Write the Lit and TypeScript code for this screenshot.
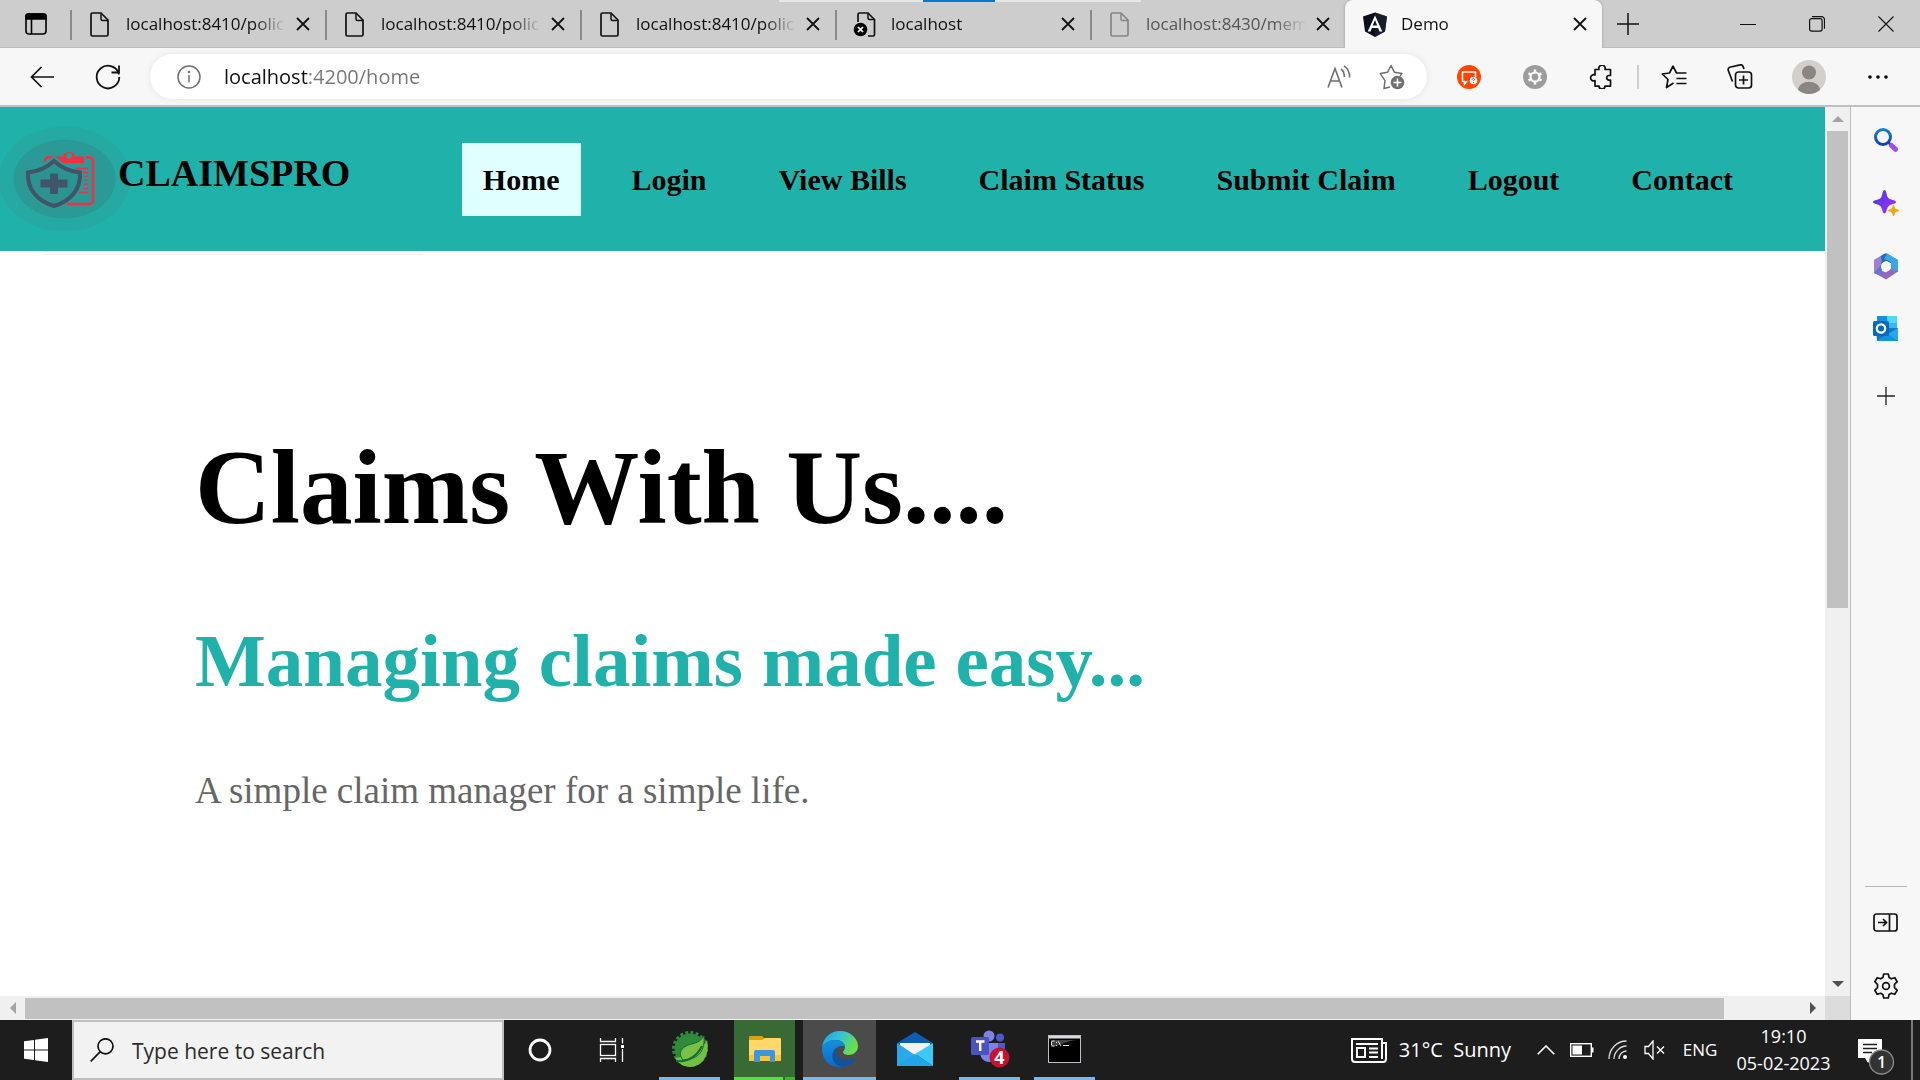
import { LitElement, html, css, svg } from "lit";
import { customElement, property } from "lit/decorators.js";
import { classMap } from "lit/directives/class-map.js";

const cross = html`<svg width="14" height="14" viewBox="0 0 14 14" fill="none" stroke="#111" stroke-width="1.8"><path d="M1 1l12 12M13 1L1 13" /></svg>`;

const pageShape = svg`<path d="M3.500 1H12l7 7v14.500a1.500 1.500 0 0 1-1.500 1.500h-14A1.500 1.500 0 0 1 2 22.500v-20A1.500 1.500 0 0 1 3.500 1z" fill="none" stroke="currentColor" stroke-width="1.7" /><path d="M12 1.500V7a1.500 1.500 0 0 0 1.500 1.500H19" fill="none" stroke="currentColor" stroke-width="1.5" />`;

const tabIcons: Record<string, unknown> = {
  page: html`<svg width="24" height="25" viewBox="-1 0 24 25">${pageShape}</svg>`,
  broken: html`<svg width="24" height="25" viewBox="0 0 24 25">
    <path d="M5 10V2.500A1.500 1.500 0 0 1 6.500 1H15l6.500 6.500v15A1.500 1.500 0 0 1 20 24h-5" fill="none" stroke="#111" stroke-width="1.7" />
    <path d="M15 1.500V6a1.500 1.500 0 0 0 1.500 1.500h5" fill="none" stroke="#111" stroke-width="1.5" />
    <circle cx="7.500" cy="17.500" r="6.800" fill="#000" />
    <path d="M5 15l5 5M10 15l-5 5" stroke="#fff" stroke-width="1.700" />
  </svg>`,
  angular: html`<svg width="24" height="25" viewBox="0 0 24 25">
    <path d="M12 0.500L24 4.500 22 19.500 12 25 2 19.500 0 4.500z" fill="#0b0f1c" />
    <path d="M12 0.500L24 4.500 22 19.500 12 25z" fill="#1d2330" opacity=".7" />
    <path d="M12 3.500L4.700 19.500h2.800l1.400-3.600h6.200l1.400 3.600h2.800zM12 8l2.200 5.600H9.800z" fill="#fff" fill-rule="evenodd" />
  </svg>`,
};

interface Tab {
  title: string;
  icon: string;
  faded?: boolean;
  active?: boolean;
}

const tabs: Tab[] = [
  { title: "localhost:8410/polic", icon: "page" },
  { title: "localhost:8410/polic", icon: "page" },
  { title: "localhost:8410/polic", icon: "page" },
  { title: "localhost", icon: "broken" },
  { title: "localhost:8430/mem", icon: "page", faded: true },
  { title: "Demo", icon: "angular", active: true },
];

const reset = css`
  :host,
  * {
    box-sizing: border-box;
  }
  button {
    display: grid;
    place-items: center;
    padding: 0;
    margin: 0;
    border: 0;
    background: none;
    color: inherit;
    font: inherit;
  }
  svg {
    display: block;
  }
`;

@customElement("tab-strip")
export class TabStrip extends LitElement {
  static styles = [
    reset,
    css`
      :host {
        position: relative;
        display: flex;
        height: 48px;
        background: #cdcdcd;
        box-shadow: inset 0 -1px 0 #bdbdbd;
        font: 17px/24px "Open Sans", "Noto Sans", sans-serif;
        color: #111;
      }
      .menu {
        width: 70px;
        padding-left: 2px;
      }
      .tab {
        display: flex;
        align-items: center;
        flex: 0 1 255px;
        min-width: 0;
        height: 48px;
        padding-right: 13px;
      }
      .tab::before {
        content: "";
        width: 2px;
        height: 30px;
        margin-top: 2px;
        background: #8b8b8b;
      }
      .tab.active {
        flex-basis: 257px;
        background: #f7f7f7;
        border-radius: 8px 8px 0 0;
        box-shadow: 0 0 3px #999;
        clip-path: inset(0 -4px 0 -4px);
      }
      .tab.active::before {
        background: none;
      }
      .pick {
        display: flex;
        align-items: center;
        gap: 14px;
        flex: 1;
        min-width: 0;
        margin-left: 16px;
        height: 48px;
      }
      .pick svg {
        flex: none;
      }
      .title {
        flex: 1;
        min-width: 0;
        overflow: hidden;
        white-space: nowrap;
        text-align: left;
        mask-image: linear-gradient(to left, transparent 4px, #000 36px);
      }
      .faded {
        color: #555;
      }
      .faded .pick svg {
        color: #858585;
      }
      .close {
        width: 18px;
        height: 24px;
        margin-left: 4px;
      }
      .new {
        width: 52px;
      }
      .window {
        display: flex;
        margin-left: auto;
      }
      .window button {
        width: 69px;
        height: 48px;
      }
      .progress {
        position: absolute;
        top: 0;
        left: 779px;
        width: 362px;
        height: 2px;
        background: linear-gradient(to right, #e6e6e6 144px, #0078d7 144px, #0078d7 216px, #e6e6e6 216px);
      }
    `,
  ];

  render() {
    return html`
      <button class="menu" aria-label="Tab actions">
        <svg width="22" height="22" viewBox="0 0 22 22" fill="none" stroke="#000" stroke-width="1.6">
          <rect x="1" y="1" width="20" height="20" rx="3" /><path d="M1 6V3a2 2 0 0 1 2-2h16a2 2 0 0 1 2 2v3z" fill="#000" /><path d="M6.500 6v15" />
        </svg>
      </button>
      ${tabs.map(
        (t) => html`<div class=${classMap({ tab: true, active: !!t.active, faded: !!t.faded })}>
          <button class="pick">${tabIcons[t.icon]}<span class="title">${t.title}</span></button>
          <button class="close" aria-label="Close tab">${cross}</button>
        </div>`
      )}
      <button class="new" aria-label="New tab">
        <svg width="22" height="22" viewBox="0 0 22 22" stroke="#111" stroke-width="1.5"><path d="M11 0v22M0 11h22" /></svg>
      </button>
      <div class="window">
        <button aria-label="Minimize"><svg width="16" height="16" viewBox="0 0 16 16" stroke="#111"><path d="M0 8.500h16" /></svg></button>
        <button aria-label="Restore">
          <svg width="16" height="16" viewBox="0 0 16 16" fill="none" stroke="#111" stroke-width="1.2"><rect x=".6" y="2.600" width="12.500" height="12.500" rx="2" /><path d="M3 .7h9.500a3 3 0 0 1 3 3v9" /></svg>
        </button>
        <button aria-label="Close"><svg width="16" height="16" viewBox="0 0 16 16" stroke="#111" stroke-width="1.1"><path d="M.5.5l15 15M15.500.5l-15 15" /></svg></button>
      </div>
      <div class="progress"></div>
    `;
  }
}

@customElement("address-bar")
export class AddressBar extends LitElement {
  static styles = [
    reset,
    css`
      :host {
        display: flex;
        align-items: center;
        height: 59px;
        padding: 0 9px;
        background: #f7f7f7;
        border-bottom: 2px solid #c0c0c0;
        font: 20px/28px "Open Sans", "Noto Sans", sans-serif;
      }
      button {
        width: 66px;
        height: 45px;
      }
      .pill {
        display: flex;
        align-items: center;
        flex: 1;
        height: 45px;
        margin: 0 9px;
        padding: 0 9px 0 27px;
        border-radius: 23px;
        background: #fff;
        box-shadow: 0 0 6px #e4e4e4;
      }
      .pill button {
        width: 53px;
      }
      .pill .info {
        width: 24px;
      }
      .url {
        flex: 1;
        min-width: 0;
        height: 32px;
        margin-left: 23px;
        padding: 0;
        border: 0;
        outline: 0;
        font: inherit;
        color: transparent;
        background: linear-gradient(to right, #111 84px, #767676 84px);
        background-clip: text;
        -webkit-background-clip: text;
      }
      .rule {
        width: 2px;
        height: 24px;
        margin: 0 2px 0 3px;
        background: #cfcfcf;
      }
      .profile {
        width: 72px;
      }
    `,
  ];

  render() {
    return html`
      <button aria-label="Back">
        <svg width="24" height="22" viewBox="0 0 24 22" fill="none" stroke="#111" stroke-width="1.700"><path d="M24 11H1.500M11.500 1L1.500 11l10 10" /></svg>
      </button>
      <button aria-label="Refresh">
        <svg width="26" height="26" viewBox="0 0 26 26" fill="none" stroke="#111" stroke-width="1.800"><path d="M24 10.500A11.300 11.300 0 1 0 24.300 13M24 1.500v7h-7.500" /></svg>
      </button>
      <div class="pill">
        <button class="info" aria-label="Site information">
          <svg width="24" height="24" viewBox="0 0 24 24" fill="none" stroke="#707070" stroke-width="1.500"><circle cx="12" cy="12" r="11" /><path d="M12 10v7.500" /><circle cx="12" cy="7" r=".6" fill="#707070" /></svg>
        </button>
        <input class="url" type="text" aria-label="Address" value="localhost:4200/home" />
        <button aria-label="Read aloud">
          <svg width="24" height="24" viewBox="0 0 24 24" fill="none" stroke="#707070" stroke-width="1.600"><path d="M1 22.500L8 3.500l7 19M3.500 16h9M14 4c2.300 1.500 3.300 4 3.300 8M17 .8c3.700 2.500 5.700 6 5.700 11.700" /></svg>
        </button>
        <button aria-label="Add to favorites">
          <svg width="26" height="26" viewBox="0 0 26 26" fill="none" stroke="#707070" stroke-width="1.500">
            <path d="M11 23l-6 1.500 1-7.800L1.300 9.600 8.500 8.300 12 1.500l3.500 6.800 7.500 1.200-2 2.500" stroke-linejoin="round" />
            <circle cx="18.500" cy="18.500" r="6.800" fill="#707070" stroke="none" /><path d="M18.500 14.500v8M14.500 18.500h8" stroke="#fff" />
          </svg>
        </button>
      </div>
      <button aria-label="Screen capture extension">
        <svg width="24" height="24" viewBox="0 0 24 24"><circle cx="12" cy="12" r="12" fill="#ff4500" /><path d="M10.500 16.500H9.500L7.500 19v-2.500H5.500V7h13v5" fill="none" stroke="#fff" stroke-width="1.500" /><circle cx="16.500" cy="15.500" r="3.800" fill="#fff" /><path d="M15.300 14.500c.2-1.500 2.500-1.200 2.300 0-.1.700-1 .7-1.100 1.500M16.500 17v1" fill="none" stroke="#ff4500" /></svg>
      </button>
      <button aria-label="Settings extension">
        <svg width="24" height="24" viewBox="0 0 24 24"><circle cx="12" cy="12" r="12" fill="#9c9c9c" /><circle cx="12" cy="12" r="4.500" fill="none" stroke="#fff" stroke-width="2.200" /><path d="M12 4.500v2.500M12 17v2.500M5.500 8.300l2.200 1.200M16.300 14.500l2.200 1.200M5.500 15.700l2.200-1.200M16.300 9.500l2.200-1.200" stroke="#fff" stroke-width="2.500" /></svg>
      </button>
      <button aria-label="Extensions">
        <svg width="24" height="24" viewBox="-1 0 24 24" fill="none" stroke="#111" stroke-width="1.700" stroke-linejoin="round"><path d="M5 4.500h4a3.200 3.200 0 1 1 6 0h5.500v6h-1.500a2.300 2.300 0 0 0 0 4.600h1.500v6H15a3 3 0 0 1-6 0H5v-5.500a3.100 3.100 0 1 1 0-5.600z" /></svg>
      </button>
      <span class="rule"></span>
      <button aria-label="Favorites">
        <svg width="26" height="24" viewBox="0 0 26 24" fill="none" stroke="#111" stroke-width="1.700" stroke-linejoin="round"><path d="M12.500 18l-7 4.500 1.500-8L1.300 9l7.200-1L12 1.200 15.500 8h10M15.500 13.500h10M15.500 18.500h10" /></svg>
      </button>
      <button aria-label="Collections">
        <svg width="26" height="25" viewBox="0 0 26 25" fill="none" stroke="#111" stroke-width="1.700"><rect x="8.500" y="8" width="16" height="16" rx="3" /><path d="M16.500 11.500v9M12 16h9M5.500 17.500L1.300 6.500A2.500 2.500 0 0 1 2.800 3.200L13 .9a2.500 2.500 0 0 1 3 1.500L17 5" /></svg>
      </button>
      <button class="profile" aria-label="Profile">
        <svg width="34" height="34" viewBox="0 0 34 34"><circle cx="17" cy="17" r="17" fill="#d3d0cc" /><circle cx="17" cy="12.500" r="7" fill="#8b8682" /><path d="M6 30c1-11 21-11 22 0a17 17 0 0 1-22 0z" fill="#8b8682" /></svg>
      </button>
      <button aria-label="More">
        <svg width="20" height="4" viewBox="0 0 20 4"><circle cx="2" cy="2" r="1.800" /><circle cx="10" cy="2" r="1.800" /><circle cx="18" cy="2" r="1.800" /></svg>
      </button>
    `;
  }
}

@customElement("claims-page")
export class ClaimsPage extends LitElement {
  static styles = [
    reset,
    css`
      :host {
        display: block;
        overflow: hidden;
        background: #fff;
        font-family: "Liberation Serif", "Times New Roman", serif;
      }
      .header {
        display: flex;
        align-items: center;
        height: 144px;
        padding-right: 71px;
        background: #20b2aa;
      }
      .logo {
        flex: none;
        margin-right: -12px;
      }
      .brand {
        padding-bottom: 12px;
        font-size: 38px;
        line-height: 44px;
        font-weight: 700;
      }
      .nav {
        display: flex;
        gap: 30px;
        margin-left: auto;
      }
      .link {
        padding: 20px 21px;
        font-size: 30px;
        line-height: 33px;
        font-weight: 700;
        white-space: nowrap;
        color: #000;
        text-decoration: none;
      }
      .current {
        background: #e0ffff;
      }
      .line {
        width: 379px;
        height: 1px;
        margin: 3px 0 0 44px;
        background: #eee;
      }
      .hero {
        padding: 173px 0 0 195px;
      }
      h1,
      h2,
      p {
        margin: 0;
      }
      h1 {
        font-size: 105px;
        line-height: 120px;
      }
      h2 {
        margin-top: 70px;
        font-size: 75px;
        line-height: 86px;
        color: #20b2aa;
      }
      p {
        margin-top: 66px;
        font-size: 37px;
        line-height: 42px;
        color: #666;
      }
    `,
  ];

  render() {
    const links = ["Home", "Login", "View Bills", "Claim Status", "Submit Claim", "Logout", "Contact"];
    return html`
      <header class="header">
        <svg class="logo" width="130" height="106" viewBox="0 6 130 106">
          <ellipse cx="64.500" cy="59" rx="66" ry="52.500" fill="#24aaa3" />
          <ellipse cx="64.500" cy="59" rx="51" ry="39.500" fill="#2b9996" />
          <path d="M45 42v-1a4 4 0 0 1 4-3.700h3M86 37.300h3a4 4 0 0 1 4 4V80a4 4 0 0 1-4 4H67" fill="none" stroke="#f2303f" stroke-width="2.600" />
          <path d="M55 36.500h8c.5-6 11.500-6 12 0h9v6.500H63z" fill="#f2303f" /><circle cx="69" cy="35.700" r="2.900" fill="#2b9996" />
          <path d="M76 48.500h12M83 52.500h5M84 56.300h4M84 60.200h4M84 64h4M83 68.300h5M79 72.500h9" stroke="#f2303f" stroke-width="1.300" />
          <path d="M54 41C46 48.500 37 51.500 28 52.500 27 69 37 81 54 86c17-5 27-17 26-33.500C71 51.500 62 48.500 54 41z" fill="#2b9491" stroke="#435468" stroke-width="4" />
          <path d="M50 53.500h8v6h9.500v8H58v6.500h-8v-6.500h-9.500v-8H50z" fill="#435468" />
        </svg>
        <div class="brand">CLAIMSPRO</div>
        <nav class="nav">
          ${links.map((l, i) => html`<a class=${classMap({ link: true, current: i === 0 })} href="#${l.toLowerCase().replace(" ", "-")}">${l}</a>`)}
        </nav>
      </header>
      <div class="line"></div>
      <main class="hero">
        <h1>Claims With Us....</h1>
        <h2>Managing claims made easy...</h2>
        <p>A simple claim manager for a simple life.</p>
      </main>
    `;
  }
}

@customElement("scroll-track")
export class ScrollTrack extends LitElement {
  @property({ type: Boolean, reflect: true }) vertical = false;
  @property({ type: Number }) share = 50;

  static styles = [
    reset,
    css`
      :host {
        display: flex;
        background: #f0f0f0;
      }
      :host([vertical]) {
        flex-direction: column;
      }
      .arrow {
        flex: none;
        width: 25px;
        height: 24px;
      }
      .rail {
        flex: 1;
        min-width: 0;
        min-height: 0;
        padding: 2px 0 1px;
      }
      :host([vertical]) .rail {
        padding: 0 2px;
      }
      .thumb {
        width: 100%;
        height: 100%;
        background: #c1c1c1;
      }
    `,
  ];

  render() {
    const v = this.vertical;
    return html`
      <button class="arrow" aria-label="Scroll back">
        <svg width="12" height="12" viewBox="0 0 12 12" fill="#a3a3a3"><path d=${v ? "M0 9l6-6 6 6z" : "M9 0L3 6l6 6z"} /></svg>
      </button>
      <div class="rail"><div class="thumb" style=${v ? `height:${this.share}%` : `width:${this.share}%`}></div></div>
      <button class="arrow" aria-label="Scroll forward">
        <svg width="12" height="12" viewBox="0 0 12 12" fill="#505050"><path d=${v ? "M0 3l6 6 6-6z" : "M3 0l6 6-6 6z"} /></svg>
      </button>
    `;
  }
}

@customElement("side-rail")
export class SideRail extends LitElement {
  static styles = [
    reset,
    css`
      :host {
        display: flex;
        flex-direction: column;
        align-items: center;
        gap: 39px;
        padding: 20px 0 23px;
        background: #f7f7f7;
      }
      button {
        width: 42px;
        height: 24px;
      }
      .add {
        margin-top: 5px;
      }
      .rule {
        width: 42px;
        height: 1px;
        margin: auto 0 -16px;
        background: #b8b8b8;
      }
    `,
  ];

  render() {
    return html`
      <button aria-label="Search">
        <svg width="26" height="26" viewBox="0 0 26 26" fill="none">
          <defs><linearGradient id="lens" x1="0" y1="0" x2="0" y2="1"><stop offset="0" stop-color="#1a80c8" /><stop offset="1" stop-color="#0c45b5" /></linearGradient></defs>
          <circle cx="10" cy="10" r="7.500" stroke="url(#lens)" stroke-width="3" /><path d="M15.500 15.500l3 3" stroke="#4a3460" stroke-width="2.500" /><path d="M18.500 18.500l4 3.800" stroke="#9b4df2" stroke-width="5" stroke-linecap="round" />
        </svg>
      </button>
      <button aria-label="Discover">
        <svg width="26" height="26" viewBox="0 0 26 26">
          <defs><linearGradient id="spark" x1="0" y1="0" x2="1" y2="1"><stop offset="0" stop-color="#3b3ae8" /><stop offset="1" stop-color="#b02df2" /></linearGradient></defs>
          <path d="M11.500 0c2 0 1.800 4.500 3.300 7.300s8.200 2.700 8.200 4.700-6 2-7.800 4.500-1.700 7-3.700 7-1.900-4.500-3.700-7S0 14 0 12s6.700-1.900 8.200-4.700S9.500 0 11.500 0z" fill="url(#spark)" />
          <path d="M20.500 15c1.200 0 .9 2.600 1.800 3.500s3.700.8 3.700 2-2.700.9-3.600 1.900-.7 3.600-1.900 3.600-.9-2.600-1.900-3.600-3.600-.7-3.600-1.900 2.700-1.100 3.600-2 .7-3.500 1.900-3.500z" fill="#eea90c" />
        </svg>
      </button>
      <button aria-label="Office">
        <svg width="26" height="27" viewBox="0 0 26 27">
          <path d="M12 0.500L1 7v12.500l7 3.500V9.500l8-5z" fill="#6684d8" />
          <path d="M14 .5L25 7v12l-7-3.500V10L11 6.500z" fill="#37a5e5" /><path d="M12 .5L8 3v9l5-4 5 2V7L14 .5z" fill="#2769b8" /><path d="M14 .5L25 7v12l-7-3.500V9l-7-3z" fill="#3aa6e6" />
          <path d="M25 18.500L13 26.500 1 19.500l7-2 5 2 5-4z" fill="#9269bd" /><path d="M1 7v12.500l7-3.500V3z" fill="#a37ed0" /><path d="M8 3v9L1 20l3 1.500 5-4V8z" fill="#517ed0" />
          <circle cx="13" cy="13.500" r="5" fill="#f7f7f7" />
        </svg>
      </button>
      <button aria-label="Outlook">
        <svg width="25" height="25" viewBox="0 0 25 25">
          <path d="M4 0h20v14H4z" fill="#35b8f1" /><path d="M14 0h10v7H14z" fill="#50d9ff" /><path d="M4 0h10v5H4z" fill="#1490df" /><path d="M3 12h22v13H4z" fill="#1279c9" /><path d="M25 12L15 18 4 25h21z" fill="#28a8ea" /><path d="M15 18l10 7H5z" fill="#1591e0" />
          <rect y="5" width="16" height="15" rx="1.500" fill="#0669c0" /><circle cx="8" cy="12.500" r="4.200" fill="none" stroke="#fff" stroke-width="2.300" />
        </svg>
      </button>
      <button class="add" aria-label="Add app">
        <svg width="18" height="18" viewBox="0 0 18 18" stroke="#222" stroke-width="1.300"><path d="M9 0v18M0 9h18" /></svg>
      </button>
      <span class="rule"></span>
      <button aria-label="Hide sidebar">
        <svg width="25" height="19" viewBox="0 0 25 19" fill="none" stroke="#111" stroke-width="1.700"><rect x="1" y="1" width="23" height="17" rx="2.500" /><path d="M16.500 1v17M5 9.500h8M10 6l3.500 3.500L10 13" /></svg>
      </button>
      <button aria-label="Settings">
        <svg width="26" height="26" viewBox="0 0 26 26" fill="none" stroke="#111" stroke-width="1.700" stroke-linejoin="round">
          <path d="M10.700 1h4.600l.8 3.600 2.200 1.200 3.500-1.100 2.400 4-2.700 2.600v3.400l2.700 2.600-2.400 4-3.500-1.100-2.200 1.200-.8 3.600h-4.600l-.8-3.600-2.200-1.200-3.500 1.100-2.400-4 2.700-2.600v-3.400L1.800 8.700l2.400-4 3.500 1.100 2.200-1.200z" /><circle cx="13" cy="13" r="3.400" />
        </svg>
      </button>
    `;
  }
}

const appIcons = [
  {
    name: "Spring Tools",
    state: "open",
    art: html`<svg width="36" height="36" viewBox="0 0 36 36">
      <circle cx="18" cy="18" r="16.500" fill="none" stroke="#2f8b3c" stroke-width="3" stroke-dasharray="2.900 2.280" />
      <circle cx="18" cy="18" r="15.500" fill="#2f8b3c" />
      <path d="M35 9c3 13-3 26-16 27C11 36 6 32 3 27c20-2 27-10 32-18z" fill="#72bf44" />
      <path d="M32 5c-5 8-12 7-18 10-7 4-7 9-3 14 17-1 22-10 21-24z" fill="#7ac046" stroke="#166b38" stroke-width="1" />
      <path d="M4 30c10 1 20-3 26-15" fill="none" stroke="#136b38" stroke-width="2" />
    </svg>`,
  },
  {
    name: "File Explorer",
    state: "busy",
    art: html`<svg width="32" height="28" viewBox="0 0 32 28">
      <path d="M0 2q0-1 1-1h12l3 3-2 4H0z" fill="#e2a008" /><path d="M0 5h13l3-2h15q1 0 1 1v21q0 1-1 1H1q-1 0-1-1z" fill="#ffd869" /><path d="M0 20h32v5q0 1-1 1H0z" fill="#f8c63c" />
      <path d="M5 27V17q0-2 2-2h17q2 0 2 2v10h-5v-6H11v6z" fill="#3b96de" />
    </svg>`,
  },
  {
    name: "Edge",
    state: "current",
    art: html`<svg width="36" height="36" viewBox="0 0 36 36">
      <defs>
        <linearGradient id="wave" x1="0" y1="0" x2="1" y2="0.400"><stop offset="0" stop-color="#1b9de2" /><stop offset=".5" stop-color="#35c1d8" /><stop offset="1" stop-color="#66e14a" /></linearGradient>
        <linearGradient id="body" x1="0" y1="0" x2="0" y2="1"><stop offset="0" stop-color="#1590dc" /><stop offset="1" stop-color="#0a6ccb" /></linearGradient>
      </defs>
      <path d="M0 17C1 6 9 0 18 0c11 0 18 8 18 15 0 6-5 9-9 9-3 0-6-1-6-3 0-1 2-2 2-5 0-4-4-7-9-7C7 9 2 12 0 17z" fill="url(#wave)" />
      <path d="M0 18C1 12 7 9 13 9c6 0 10 3 10 7-2-2-8-2-10 4-2 7 2 13 9 15-12 4-22-5-22-17z" fill="url(#body)" />
      <path d="M15 16c-3 5 1 13 9 13 4 0 7-1 9-2 1 0 1 1 0 2-4 6-11 8-16 6-8-3-9-14-2-19z" fill="#10549f" />
    </svg>`,
  },
  {
    name: "Mail",
    state: "idle",
    art: html`<svg width="36" height="34" viewBox="0 0 36 34">
      <path d="M0 11L18 0l18 11v6H0z" fill="#0a5fb0" /><path d="M3 11h30v12H3z" fill="#f3f3f3" /><path d="M0 11l18 12L36 34H0z" fill="#2aa9e9" /><path d="M36 11L18 22l18 12z" fill="#39caf6" /><path d="M18 22l18 12H0z" fill="#20a5e8" />
    </svg>`,
  },
  {
    name: "Teams",
    state: "open",
    art: html`<svg width="40" height="38" viewBox="0 0 40 38">
      <circle cx="19" cy="6" r="5.500" fill="#7b83eb" /><circle cx="30" cy="7.500" r="4" fill="#5059c9" /><path d="M26 13h9v12q-2 6-9 4z" fill="#5059c9" /><path d="M10 13h18v10c0 12-17 12-18 0z" fill="#7b83eb" />
      <rect x="1" y="7" width="18" height="18" rx="1.500" fill="#4b53bc" /><path d="M6 11.500h8.500M10.200 11.500V21" stroke="#fff" stroke-width="2.400" />
      <circle cx="29.500" cy="27.500" r="10" fill="#c4122f" /><text x="29.500" y="34" text-anchor="middle" font-family="Open Sans, sans-serif" font-weight="700" font-size="18" fill="#fff">4</text>
    </svg>`,
  },
  {
    name: "Command Prompt",
    state: "open",
    art: html`<svg width="33" height="28" viewBox="0 0 33 28">
      <rect x=".5" y=".5" width="32" height="27" fill="#000" stroke="#b9bfc4" /><path d="M1 1h31v2.500H1z" fill="#d8dcdf" /><path d="M3 5h26C18 6 14 10 3 12z" fill="#444" />
      <path d="M6.500 6h-2L3.500 7v3l1 1h2M8.500 7v1M8.500 10v1M10 6l3 5M15 10.500h6" fill="none" stroke="#e8e8e8" />
    </svg>`,
  },
];

@customElement("task-bar")
export class TaskBar extends LitElement {
  static styles = [
    reset,
    css`
      :host {
        display: flex;
        height: 60px;
        background: #1d1d1d;
        color: #fff;
        font: 18px/24px "Open Sans", "Noto Sans", sans-serif;
      }
      button {
        height: 60px;
      }
      .start {
        width: 72px;
      }
      .search {
        display: flex;
        align-items: center;
        width: 432px;
        padding-left: 16px;
        gap: 18px;
        border: 2px solid #c0c0c0;
        background: #f2f2f2;
      }
      .query {
        flex: 1;
        min-width: 0;
        height: 32px;
        padding: 2px 0 0;
        border: 0;
        outline: 0;
        background: none;
        font-size: 21px;
        line-height: 30px;
        font-family: inherit;
      }
      .query::placeholder {
        color: #2b2b2b;
        opacity: 1;
      }
      .round {
        width: 72px;
      }
      .view {
        width: 72px;
      }
      .apps {
        display: flex;
        padding-left: 4px;
      }
      .app {
        width: 61px;
        margin: 0 7px;
        border-bottom: 3px solid transparent;
      }
      .open {
        border-color: #76b9ed;
      }
      .current {
        width: 73px;
        margin: 0 1px;
        background: #4b4b4b;
        border-color: #76b9ed;
      }
      .busy {
        background: #386a35;
        border-image: linear-gradient(to right, #4fe43a 47px, #386a35 47px, #386a35 49px, #3fb52e 49px) 3;
      }
      .tray {
        display: flex;
        align-items: center;
        margin-left: auto;
      }
      .weather {
        display: flex;
        align-items: center;
        gap: 12px;
        margin-right: 17px;
        font-size: 20px;
        white-space: pre;
      }
      .icon {
        width: 36px;
      }
      .lang {
        width: 56px;
        font-size: 17px;
      }
      .clock {
        display: block;
        width: 111px;
        line-height: 27px;
        text-align: center;
      }
      .clock span {
        display: block;
      }
      .notes {
        width: 72px;
        padding: 12px 0 0 2px;
      }
      .peek {
        width: 9px;
        border-left: 2px solid #777;
      }
    `,
  ];

  render() {
    return html`
      <button class="start" aria-label="Start">
        <svg width="24" height="24" viewBox="0 0 24 24" fill="#fff"><path d="M0 3.300L10 2v9.500H0zM11 1.800L24 0v11.500H11zM0 12.500h10V22L0 20.700zM11 12.500h13V24l-13-1.800z" /></svg>
      </button>
      <label class="search">
        <svg width="24" height="24" viewBox="0 0 24 24" fill="none" stroke="#111" stroke-width="1.700"><circle cx="15.500" cy="8.300" r="7.500" /><path d="M10.300 13.700L.7 23.300" /></svg>
        <input class="query" type="text" aria-label="Search" placeholder="Type here to search" />
      </label>
      <button class="round" aria-label="Cortana">
        <svg width="24" height="24" viewBox="0 0 24 24" fill="none" stroke="#fff" stroke-width="2.800"><circle cx="12" cy="12" r="10" /></svg>
      </button>
      <button class="view" aria-label="Task view">
        <svg width="26" height="24" viewBox="0 0 26 24" fill="none" stroke="#fff" stroke-width="1.300"><rect x="1.500" y="6.500" width="15" height="11" /><path d="M1.500 0v3.500h15V0M1.500 24v-3.500h15V24M23.500 0v5.500M23.500 11v13" /><path d="M22 7h3v3h-3z" fill="#fff" stroke="none" /></svg>
      </button>
      <div class="apps">
        ${appIcons.map((a) => html`<button class="app ${a.state}" aria-label=${a.name}>${a.art}</button>`)}
      </div>
      <div class="tray">
        <button class="weather">
          <svg width="36" height="25" viewBox="0 0 36 25" fill="none" stroke="#fff" stroke-width="2"><path d="M31 5h4v16a3 3 0 0 1-3 3H4a3 3 0 0 1-3-3V1h30v20" /><rect x="6" y="10" width="8" height="9" /><path d="M5 6h22M18 10.500h9M18 14.500h9M18 19h9" /></svg>
          <span>31°C  Sunny</span>
        </button>
        <button class="icon" aria-label="Hidden icons"><svg width="18" height="10" viewBox="0 0 18 10" fill="none" stroke="#fff" stroke-width="1.600"><path d="M.7 9.300L9 1l8.300 8.300" /></svg></button>
        <button class="icon" aria-label="Battery"><svg width="24" height="14" viewBox="0 0 24 14"><rect x=".7" y=".7" width="20.600" height="12.600" fill="none" stroke="#fff" stroke-width="1.400" /><path d="M2.500 2.500h9.500v9H2.500zM22 4.500h1.500v5H22z" fill="#fff" /></svg></button>
        <button class="icon" aria-label="Network"><svg width="20" height="20" viewBox="0 0 20 20" fill="none" stroke="#ddd" stroke-width="1.300"><path d="M1 19C1 9 9 1 18.500 1M6 19C6 12 12 6 18.500 6M11 19c0-4.500 3.500-8 7.500-8" /><circle cx="17" cy="17" r="2" fill="#fff" stroke="none" /></svg></button>
        <button class="icon" aria-label="Volume muted"><svg width="21" height="20" viewBox="0 0 21 20" fill="none" stroke="#fff" stroke-width="1.300"><path d="M1 6.500h3.500L9 1v18l-4.500-5.500H1zM13 6.500l7 7M20 6.500l-7 7" /></svg></button>
        <button class="lang">ENG</button>
        <button class="clock"><span>19:10</span><span>05-02-2023</span></button>
        <button class="notes" aria-label="Notifications">
          <svg width="38" height="38" viewBox="0 0 38 38"><path d="M1 2h24v19H15l-4 5-3-5H1z" fill="#fff" /><path d="M6 7.500h14M6 11.500h14M6 15.500h9" stroke="#1d1d1d" stroke-width="1.300" /><circle cx="24.500" cy="25" r="12" fill="#333" stroke="#8a8a8a" stroke-width="1.300" /><text x="24.500" y="31" text-anchor="middle" font-family="Open Sans, sans-serif" font-weight="600" font-size="16" fill="#fff">1</text></svg>
        </button>
        <button class="peek" aria-label="Show desktop"></button>
      </div>
    `;
  }
}

@customElement("app-root")
export class AppRoot extends LitElement {
  static styles = css`
    :host {
      display: grid;
      grid-template-rows: auto auto 1fr auto;
      min-height: 100vh;
      background: #f7f7f7;
    }
    .middle {
      display: grid;
      grid-template-columns: minmax(0, 1fr) 25px 1px 69px;
      grid-template-rows: minmax(0, 1fr) 24px;
    }
    .edge {
      grid-column: 3;
      grid-row: 1 / 3;
      background: #bdbdbd;
    }
    .rail {
      grid-column: 4;
      grid-row: 1 / 3;
    }
    .across {
      grid-column: 1;
      grid-row: 2;
    }
    .corner {
      background: #dcdcdc;
    }
  `;

  render() {
    return html`
      <tab-strip></tab-strip>
      <address-bar></address-bar>
      <div class="middle">
        <claims-page></claims-page>
        <scroll-track vertical share="56.7"></scroll-track>
        <div class="edge"></div>
        <side-rail class="rail"></side-rail>
        <scroll-track class="across" share="95.7"></scroll-track>
        <div class="corner"></div>
      </div>
      <task-bar></task-bar>
    `;
  }
}
